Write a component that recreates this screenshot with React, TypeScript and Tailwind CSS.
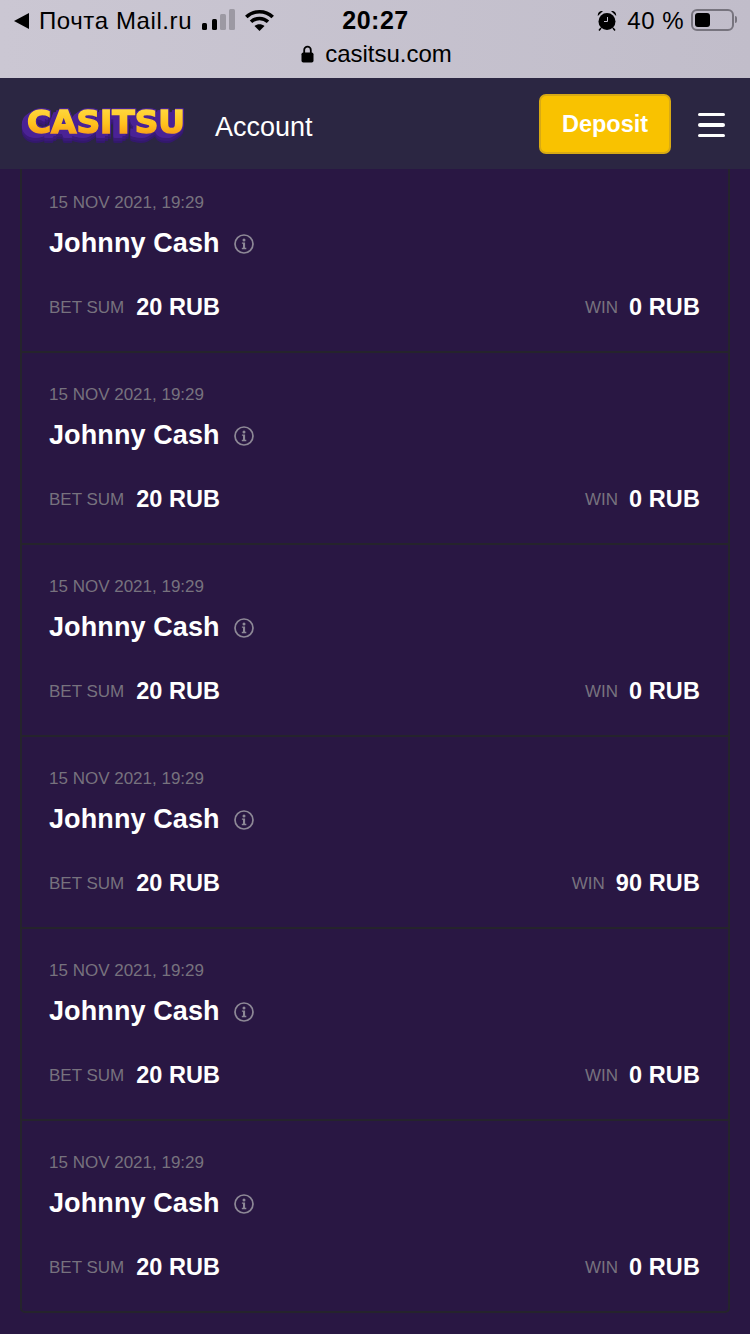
import React from "react";

const sans = "font-['Liberation_Sans',Arial,sans-serif]";

const bets = [
  { win: 0 },
  { win: 0 },
  { win: 0 },
  { win: 90 },
  { win: 0 },
  { win: 0 },
];

const InfoIcon = () => (
  <svg width="20" height="20" viewBox="0 0 20 20" fill="none" className="ml-[14px] mt-[2px]">
    <circle cx="10" cy="10" r="9" stroke="#8d8896" strokeWidth="1.7" />
    <circle cx="10" cy="5.900" r="1.500" fill="#8d8896" />
    <path d="M7.900 8.400h3.200v5.400h1.200v1.400H7.800v-1.400H9V9.800H7.900z" fill="#8d8896" />
  </svg>
);

const Wifi = () => (
  <svg width="29" height="22" viewBox="0 0 29 22" fill="none" stroke="#000" strokeWidth="3.600" className="mb-[3px]">
    <path d="M1.300 8C8.500 .9 20.500 .9 27.700 8" />
    <path d="M6 12.800c4.800-4.500 12.200-4.500 17 0" />
    <path d="M14.500 22l-5-5c2.800-2.400 7.200-2.400 10 0z" fill="#000" stroke="none" />
  </svg>
);

const Alarm = () => (
  <svg width="20" height="21" viewBox="0 0 20 21" className="mr-[10px] mb-[2px]">
    <circle cx="10" cy="11.500" r="8.500" fill="#000" />
    <path d="M.8 6C.6 2.600 2.800.6 6 1zM19.200 6c.2-3.400-2-5.400-5.200-5z" fill="#000" />
    <path d="M4 18l-2 2.500M16 18l2 2.500" stroke="#000" strokeWidth="1.500" />
    <path d="M10.500 7v4.500H7" stroke="#c2bfcc" strokeWidth="1" fill="none" />
  </svg>
);

const Lock = () => (
  <svg width="13" height="18" viewBox="0 0 13 18" className="mr-[11px]">
    <path d="M3.200 8V5a3.300 3.300 0 0 1 6.600 0v3" stroke="#000" strokeWidth="1.800" fill="none" />
    <rect x="0.500" y="7.500" width="12" height="10" rx="1.800" fill="#000" />
  </svg>
);

const Signal = () => (
  <div className="flex items-end h-[21px] ml-[10px] mr-[10px] mb-[3px]">
    <span className="w-[5px] h-[7px] rounded-[1.5px] bg-black" />
    <span className="w-[5px] h-[11px] ml-[5px] rounded-[1.5px] bg-black" />
    <span className="w-[6px] h-[16px] ml-[3px] rounded-[1.5px] bg-[#9c99a3]" />
    <span className="w-[6px] h-[21px] ml-[3px] rounded-[1.5px] bg-[#9c99a3]" />
  </div>
);

const Battery = () => (
  <div className="flex items-center ml-[7px] mb-[3px]">
    <div className="w-[43px] h-[22px] rounded-[6px] border-2 border-[#77747e] p-[2px]">
      <div className="w-[15px] h-full rounded-[3px] bg-black" />
    </div>
    <span className="w-[2px] h-[7px] ml-[1px] rounded-r-full bg-[#77747e]" />
  </div>
);

const Logo = () => (
  <svg
    width="172"
    height="44"
    viewBox="0 0 172 44"
    className="-ml-[2px] mt-[2px] [filter:drop-shadow(0_-1px_0_#4a2295)_drop-shadow(1px_0_0_#4a2295)_drop-shadow(-3px_2px_0_#4a2295)_drop-shadow(-3px_2px_0_#4a2295)_drop-shadow(0_3px_0_#3a1a78)_drop-shadow(0_2px_0_#33186c)]"
  >
    <defs>
      <linearGradient id="gold" x1="0" y1="0" x2="0" y2="1">
        <stop offset="0" stopColor="#ffe14a" />
        <stop offset="0.55" stopColor="#ffc21d" />
        <stop offset="1" stopColor="#f58a14" />
      </linearGradient>
    </defs>
    <text
      x="9"
      y="30"
      textLength="158"
      lengthAdjust="spacingAndGlyphs"
      fontFamily="'DejaVu Sans', Arial, sans-serif"
      fontWeight="700"
      fontSize="32"
      fill="url(#gold)"
      stroke="url(#gold)"
      strokeWidth="1.500"
    >
      CASITSU
    </text>
  </svg>
);

const BetCard = ({ win, last }: { win: number; last: boolean }) => (
  <div className={`h-[192px] border-x-2 border-b-2 border-[#25242c] pl-[27px] pr-[28px] pt-[32px] ${last ? "rounded-b-[5px]" : ""}`}>
    <div className="text-[17px] leading-[20px] text-[#77727e]">15 NOV 2021, 19:29</div>
    <div className="flex items-center mt-[14px] h-[32px]">
      <span className="text-[27px] tracking-[0.1px] font-bold text-white">Johnny Cash</span>
      <InfoIcon />
    </div>
    <div className="flex items-center justify-between mt-[33px] h-[32px]">
      <div className="flex items-center">
        <span className="text-[17px] text-[#77727e]">BET SUM</span>
        <span className="ml-[12px] text-[23.500px] font-bold text-white">20 RUB</span>
      </div>
      <div className="flex items-center">
        <span className="text-[17px] text-[#77727e]">WIN</span>
        <span className="ml-[11px] text-[23.500px] tracking-[0.1px] font-bold text-white">{win} RUB</span>
      </div>
    </div>
  </div>
);

export default function App() {
  return (
    <div className={`${sans} w-[750px] h-[1334px] overflow-hidden bg-[#291743]`}>
      <div className="relative z-10 h-[78px] bg-gradient-to-r from-[#cbc7d3] to-[#c1bdca] text-black">
        <div className="flex items-center h-[42px] pl-[14px] pr-[13px]">
          <div className="flex flex-1 items-center">
            <span className="w-0 h-0 border-y-[8px] border-y-transparent border-r-[15px] border-r-black mr-[10px]" />
            <span className="text-[24px] tracking-[0.6px]">Почта Mail.ru</span>
            <Signal />
            <Wifi />
          </div>
          <span className="text-[25px] font-bold tracking-[0.5px]">20:27</span>
          <div className="flex flex-1 items-center justify-end">
            <Alarm />
            <span className="text-[24px] tracking-[0.5px] mb-[1px]">40 %</span>
            <Battery />
          </div>
        </div>
        <div className="flex items-center justify-center h-[24px] pl-[3px]">
          <Lock />
          <span className="text-[24px]">casitsu.com</span>
        </div>
      </div>

      <header className="relative z-10 flex items-center h-[91px] pl-[20px] pr-[25px] bg-[#2b2642]">
        <Logo />
        <span className="ml-[25px] mt-[7px] text-[27px] text-white">Account</span>
        <button className="ml-auto w-[132px] h-[60px] pt-[3px] rounded-[7px] border-2 border-[#d8aa14] bg-[#f9c200] text-[23.500px] font-bold text-white">
          Deposit
        </button>
        <div className="ml-[27px] mt-[3px] flex flex-col gap-[7px] w-[27px]">
          <span className="h-[3.500px] rounded-full bg-white" />
          <span className="h-[3.500px] rounded-full bg-white" />
          <span className="h-[3.500px] rounded-full bg-white" />
        </div>
      </header>

      <main className="-mt-[8px] px-[20px]">
        {bets.map((bet, i) => (
          <BetCard key={i} win={bet.win} last={i === bets.length - 1} />
        ))}
      </main>
    </div>
  );
}
